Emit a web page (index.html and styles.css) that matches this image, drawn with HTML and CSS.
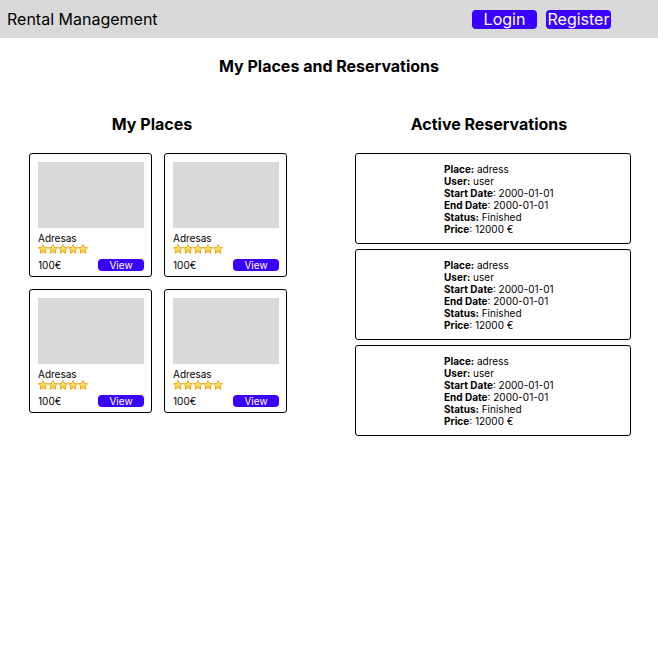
FILE: index.html
```html
<!DOCTYPE html>
<html lang="en">
<head>
<meta charset="utf-8">
<title>Rental Management</title>
<link rel="stylesheet" href="styles.css">
</head>
<body>
<svg width="0" height="0" class="defs">
  <defs>
    <linearGradient id="sg" x1="0" y1="0" x2="0" y2="1">
      <stop offset="0" stop-color="#fff0a0"/>
      <stop offset="1" stop-color="#f9c31c"/>
    </linearGradient>
    <symbol id="star" viewBox="0 0 10 10">
      <path d="M5 .5 6.4 3.4 9.6 3.7 7.2 5.9 7.9 9.3 5 7.6 2.1 9.3 2.8 5.9.4 3.7 3.6 3.4Z" fill="url(#sg)" stroke="#e59b00" stroke-width=".8" stroke-linejoin="round"/>
    </symbol>
  </defs>
</svg>
<header class="topbar">
  <div class="brand">Rental Management</div>
  <nav class="auth">
    <button class="btn-nav">Login</button>
    <button class="btn-nav">Register</button>
  </nav>
</header>
<main class="page">
  <h1 class="page-title">My Places and Reservations</h1>
  <div class="columns">
    <section class="col-places">
      <h2 class="col-title">My Places</h2>
      <div class="place-grid">
        <div class="place-card">
          <div class="place-img"></div>
          <div class="place-name">Adresas</div>
          <div class="stars"><svg><use href="#star"/></svg><svg><use href="#star"/></svg><svg><use href="#star"/></svg><svg><use href="#star"/></svg><svg><use href="#star"/></svg></div>
          <div class="place-foot"><span class="price">100€</span><button class="btn-view">View</button></div>
        </div>
        <div class="place-card">
          <div class="place-img"></div>
          <div class="place-name">Adresas</div>
          <div class="stars"><svg><use href="#star"/></svg><svg><use href="#star"/></svg><svg><use href="#star"/></svg><svg><use href="#star"/></svg><svg><use href="#star"/></svg></div>
          <div class="place-foot"><span class="price">100€</span><button class="btn-view">View</button></div>
        </div>
        <div class="place-card">
          <div class="place-img"></div>
          <div class="place-name">Adresas</div>
          <div class="stars"><svg><use href="#star"/></svg><svg><use href="#star"/></svg><svg><use href="#star"/></svg><svg><use href="#star"/></svg><svg><use href="#star"/></svg></div>
          <div class="place-foot"><span class="price">100€</span><button class="btn-view">View</button></div>
        </div>
        <div class="place-card">
          <div class="place-img"></div>
          <div class="place-name">Adresas</div>
          <div class="stars"><svg><use href="#star"/></svg><svg><use href="#star"/></svg><svg><use href="#star"/></svg><svg><use href="#star"/></svg><svg><use href="#star"/></svg></div>
          <div class="place-foot"><span class="price">100€</span><button class="btn-view">View</button></div>
        </div>
      </div>
    </section>
    <section class="col-res">
      <h2 class="col-title">Active Reservations</h2>
      <div class="res-list">
        <div class="res-card">
          <div class="res-info">
            <div><b>Place:</b> adress</div>
            <div><b>User:</b> user</div>
            <div><b>Start Date</b>: 2000-01-01</div>
            <div><b>End Date</b>: 2000-01-01</div>
            <div><b>Status:</b> Finished</div>
            <div><b>Price</b>: 12000 €</div>
          </div>
        </div>
        <div class="res-card">
          <div class="res-info">
            <div><b>Place:</b> adress</div>
            <div><b>User:</b> user</div>
            <div><b>Start Date</b>: 2000-01-01</div>
            <div><b>End Date</b>: 2000-01-01</div>
            <div><b>Status:</b> Finished</div>
            <div><b>Price</b>: 12000 €</div>
          </div>
        </div>
        <div class="res-card">
          <div class="res-info">
            <div><b>Place:</b> adress</div>
            <div><b>User:</b> user</div>
            <div><b>Start Date</b>: 2000-01-01</div>
            <div><b>End Date</b>: 2000-01-01</div>
            <div><b>Status:</b> Finished</div>
            <div><b>Price</b>: 12000 €</div>
          </div>
        </div>
      </div>
    </section>
  </div>
</main>
</body>
</html>
```
FILE: styles.css
```css
* { box-sizing: border-box; }
html, body { margin: 0; padding: 0; background: #fff; }
body { font-family: Inter, "Noto Sans", sans-serif; color: #000; width: 658px; }
.defs { position: absolute; width: 0; height: 0; }

.topbar {
  height: 38px;
  background: #d9d9d9;
  display: flex;
  align-items: center;
  padding-left: 7px;
}
.brand { font-size: 16px; line-height: 20px; flex: 1; }
.auth { display: flex; gap: 9px; margin-right: 47px; }
.btn-nav {
  width: 65px; height: 19px;
  background: #3a00ff;
  color: #fff;
  border: 0;
  border-radius: 4px;
  font-family: Inter, sans-serif;
  font-size: 16px;
  line-height: 19px;
  padding: 0;
  white-space: nowrap;
  overflow: visible;
  display: flex; justify-content: center; align-items: center;
}

.page-title {
  margin: 18px 0 0;
  font-size: 16px;
  line-height: 20px;
  font-weight: 700;
  text-align: center;
}

.columns {
  display: grid;
  grid-template-columns: 304px 338px;
  column-gap: 16px;
  margin-top: 38px;
}
.col-title {
  margin: 0;
  font-size: 16px;
  line-height: 20px;
  font-weight: 700;
  text-align: center;
}

.place-grid {
  display: grid;
  grid-template-columns: 123px 123px;
  column-gap: 12px;
  row-gap: 12px;
  margin: 19px 0 0 29px;
}
.place-card {
  border: 1px solid #000;
  border-radius: 3px;
  padding: 8px 7px 5px 8px;
  display: flex;
  flex-direction: column;
}
.place-img { height: 66px; background: #d9d9d9; }
.place-name { font-size: 10px; line-height: 12px; margin-top: 4px; }
.stars { display: flex; height: 10px; align-items: center; }
.stars svg { width: 10px; height: 10px; }
.place-foot {
  display: flex;
  justify-content: space-between;
  align-items: center;
  margin-top: 5px;
}
.price { font-size: 10px; line-height: 12px; }
.btn-view {
  width: 46px; height: 12px;
  background: #3a00ff;
  color: #fff;
  border: 0;
  border-radius: 4px;
  font-family: Inter, sans-serif;
  font-size: 10px;
  line-height: 12px;
  padding: 0;
}

.res-list {
  display: flex;
  flex-direction: column;
  gap: 5px;
  margin: 19px 0 0 35px;
  width: 276px;
}
.res-card {
  border: 1px solid #000;
  border-radius: 3px;
  padding: 9px 0 8px 88px;
  font-size: 10px;
  line-height: 12px;
}
.res-info b { font-weight: 700; }
```
